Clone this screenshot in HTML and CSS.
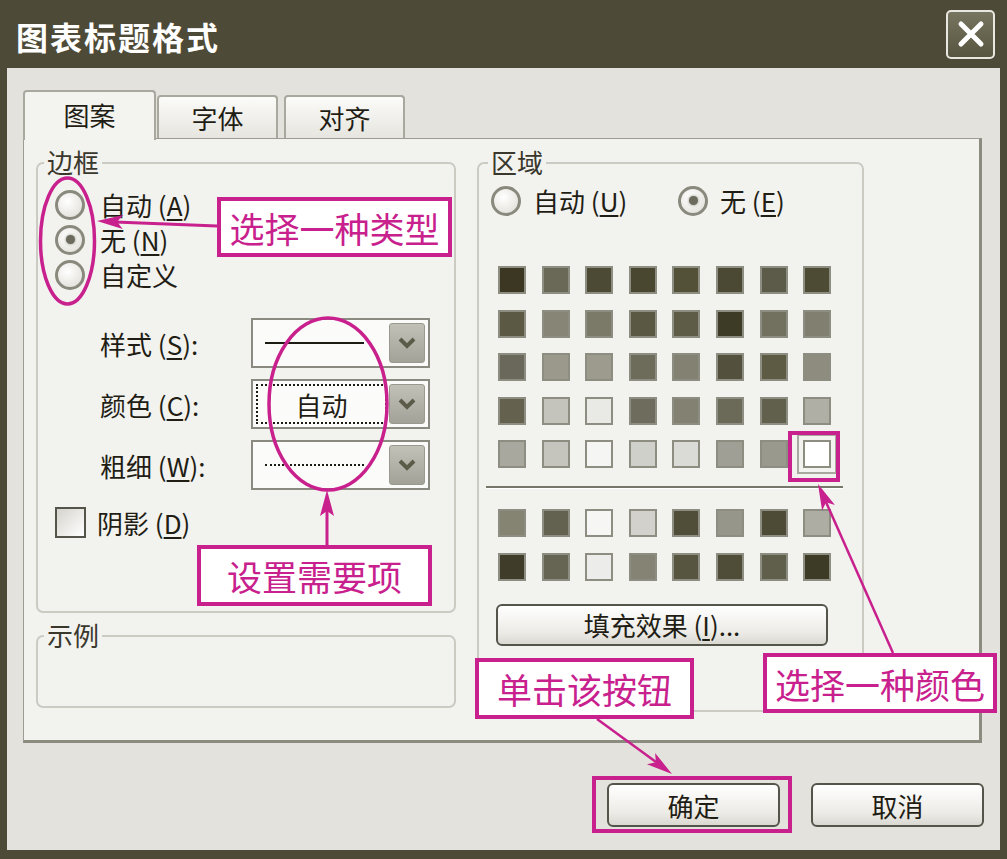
FILE: index.html
```html
<!DOCTYPE html>
<html lang="zh-CN">
<head>
  <meta charset="UTF-8">
  <title>图表标题格式</title>
  <link rel="stylesheet" href="styles.css">
</head>
<body>

<div class="window">
  <div class="titlebar">
    <span class="title">图表标题格式</span>
    <div class="close">
      <svg width="30" height="30" viewBox="0 0 30 30">
        <path d="M5 5 L25 25 M25 5 L5 25" stroke="#fff" stroke-width="5" stroke-linecap="round"/>
      </svg>
    </div>
  </div>

  <div class="client">
    <div class="tabs">
      <div class="tab active">图案</div>
      <div class="tab">字体</div>
      <div class="tab tab-last">对齐</div>
    </div>

    <div class="panel">
      <div class="col-left">
        <!-- 边框 -->
        <div class="group border-group">
          <div class="group-title">边框</div>
          <div class="radios">
            <div class="radio-row"><span class="radio"></span>自动 (<u>A</u>)</div>
            <div class="radio-row"><span class="radio checked"></span>无 (<u>N</u>)</div>
            <div class="radio-row"><span class="radio"></span>自定义</div>
          </div>
          <div class="combos">
            <div class="combo-row">
              <span class="combo-label">样式 (<u>S</u>):</span>
              <div class="combo">
                <div class="combo-field"><span class="line solid"></span></div>
                <span class="drop"><svg width="20" height="16" viewBox="0 0 20 16"><path d="M3 4 L10 11 L17 4" fill="none" stroke="#5c5b49" stroke-width="4"/></svg></span>
              </div>
            </div>
            <div class="combo-row">
              <span class="combo-label">颜色 (<u>C</u>):</span>
              <div class="combo">
                <div class="combo-field focus">自动</div>
                <span class="drop"><svg width="20" height="16" viewBox="0 0 20 16"><path d="M3 4 L10 11 L17 4" fill="none" stroke="#5c5b49" stroke-width="4"/></svg></span>
              </div>
            </div>
            <div class="combo-row">
              <span class="combo-label">粗细 (<u>W</u>):</span>
              <div class="combo">
                <div class="combo-field"><span class="line dotted"></span></div>
                <span class="drop"><svg width="20" height="16" viewBox="0 0 20 16"><path d="M3 4 L10 11 L17 4" fill="none" stroke="#5c5b49" stroke-width="4"/></svg></span>
              </div>
            </div>
          </div>
          <div class="check-row"><span class="check"></span>阴影 (<u>D</u>)</div>
        </div>

        <!-- 示例 -->
        <div class="group example-group">
          <div class="group-title">示例</div>
        </div>
      </div>

      <!-- 区域 -->
      <div class="group area-group">
        <div class="group-title">区域</div>
        <div class="area-radios">
          <div class="radio-row first"><span class="radio"></span>自动 (<u>U</u>)</div>
          <div class="radio-row"><span class="radio checked"></span>无 (<u>E</u>)</div>
        </div>

        <div class="palette">
          <span class="swatch" style="background:#3b3723"></span>
          <span class="swatch" style="background:#6a6957"></span>
          <span class="swatch" style="background:#4c4a35"></span>
          <span class="swatch" style="background:#4a4730"></span>
          <span class="swatch" style="background:#545139"></span>
          <span class="swatch" style="background:#4b4833"></span>
          <span class="swatch" style="background:#5c5b49"></span>
          <span class="swatch" style="background:#4e4b34"></span>

          <span class="swatch" style="background:#5b5944"></span>
          <span class="swatch" style="background:#878676"></span>
          <span class="swatch" style="background:#7b7a68"></span>
          <span class="swatch" style="background:#5a5843"></span>
          <span class="swatch" style="background:#5e5b47"></span>
          <span class="swatch" style="background:#3d3a25"></span>
          <span class="swatch" style="background:#727160"></span>
          <span class="swatch" style="background:#818070"></span>

          <span class="swatch" style="background:#69685a"></span>
          <span class="swatch" style="background:#9a998b"></span>
          <span class="swatch" style="background:#9c9b8e"></span>
          <span class="swatch" style="background:#6d6c5b"></span>
          <span class="swatch" style="background:#838272"></span>
          <span class="swatch" style="background:#53513d"></span>
          <span class="swatch" style="background:#5e5b45"></span>
          <span class="swatch" style="background:#8d8c7e"></span>

          <span class="swatch" style="background:#64624e"></span>
          <span class="swatch" style="background:#c4c3bc"></span>
          <span class="swatch" style="background:#e9e9e6"></span>
          <span class="swatch" style="background:#6e6d5d"></span>
          <span class="swatch" style="background:#838272"></span>
          <span class="swatch" style="background:#6b6a58"></span>
          <span class="swatch" style="background:#61604c"></span>
          <span class="swatch" style="background:#b0afa6"></span>

          <span class="swatch" style="background:#a9a89f"></span>
          <span class="swatch" style="background:#c5c4bd"></span>
          <span class="swatch" style="background:#f5f5f3"></span>
          <span class="swatch" style="background:#d0d0cb"></span>
          <span class="swatch" style="background:#dadad6"></span>
          <span class="swatch" style="background:#a09f95"></span>
          <span class="swatch" style="background:#9a998d"></span>
          <span class="swatch selected" style="background:#ffffff"></span>
        </div>

        <div class="sep"></div>

        <div class="palette extra">
          <span class="swatch" style="background:#858473"></span>
          <span class="swatch" style="background:#636150"></span>
          <span class="swatch" style="background:#f6f6f4"></span>
          <span class="swatch" style="background:#d2d1cc"></span>
          <span class="swatch" style="background:#504d38"></span>
          <span class="swatch" style="background:#97968a"></span>
          <span class="swatch" style="background:#4d4b36"></span>
          <span class="swatch" style="background:#aeada4"></span>

          <span class="swatch" style="background:#3f3c2a"></span>
          <span class="swatch" style="background:#666553"></span>
          <span class="swatch" style="background:#ececea"></span>
          <span class="swatch" style="background:#858474"></span>
          <span class="swatch" style="background:#57553f"></span>
          <span class="swatch" style="background:#4f4c37"></span>
          <span class="swatch" style="background:#605f4c"></span>
          <span class="swatch" style="background:#3d3a26"></span>
        </div>

        <div class="btn fill-btn">填充效果 (<u>I</u>)...</div>
      </div>
    </div>

    <div class="footer">
      <div class="btn dlg-btn">确定</div>
      <div class="btn dlg-btn">取消</div>
    </div>
  </div>

  <!-- annotation marks -->
  <svg class="marks" width="1007" height="859" viewBox="0 0 1007 859">
    <g fill="none" stroke="#c8208c" stroke-width="3.5">
      <ellipse cx="67.5" cy="241" rx="27" ry="63"/>
      <ellipse cx="328" cy="404" rx="59" ry="86"/>
      <rect x="790" y="433" width="48" height="47" stroke-width="4"/>
      <rect x="594" y="778" width="196" height="53" stroke-width="4"/>
      <line x1="217" y1="226" x2="115" y2="222" stroke-width="3"/>
      <line x1="327" y1="545" x2="327" y2="508" stroke-width="3"/>
      <line x1="893" y1="653" x2="826" y2="502" stroke-width="2.5"/>
      <line x1="597" y1="719" x2="656" y2="762" stroke-width="2.5"/>
    </g>
    <g fill="#c8208c">
      <polygon points="97,221 123.3,215.1 117,221.8 122.7,229.1"/>
      <polygon points="327,490 320,516 327,511 334,516"/>
      <polygon points="818,484 834.9,505 826.1,502.3 822.1,510.6"/>
      <polygon points="672,774 655.1,753 655.9,762.2 646.9,764.2"/>
    </g>
  </svg>

  <div class="callout c-type">选择一种类型</div>
  <div class="callout c-set">设置需要项</div>
  <div class="callout c-color">选择一种颜色</div>
  <div class="callout c-click">单击该按钮</div>
</div>

</body>
</html>
```

FILE: styles.css
```css
* {
  box-sizing: border-box;
}
body {
  margin: 0;
  width: 1007px;
  height: 859px;
  overflow: hidden;
  font-family: "Noto Sans CJK SC", "Noto Sans", sans-serif;
  color: #1f1d14;
}
u {
  text-decoration: underline;
  text-underline-offset: 3px;
}

/* window frame */
.window {
  position: relative;
  width: 1007px;
  height: 859px;
  background: #4d4a37;
  display: flex;
  flex-direction: column;
}
.titlebar {
  height: 68px;
  display: flex;
  align-items: center;
  justify-content: space-between;
  padding: 4px 12px 0 16px;
}
.title {
  color: #fff;
  font-size: 32px;
  font-weight: bold;
  letter-spacing: 2px;
}
.close {
  width: 49px;
  height: 49px;
  margin-top: -4px;
  border: 2px solid #e9e8e0;
  border-radius: 5px;
  background: linear-gradient(#77745f, #57543f);
  display: flex;
  align-items: center;
  justify-content: center;
}
.client {
  flex: 1;
  margin: 0 7px 9px 7px;
  background: #e3e2dc;
  padding: 22px 18px 0 16px;
  display: flex;
  flex-direction: column;
}

/* tabs */
.tabs {
  position: relative;
  z-index: 1;
  height: 50px;
  margin-bottom: -2px;
  display: flex;
  align-items: flex-start;
}
.tab {
  width: 121px;
  height: 43px;
  margin-top: 5px;
  margin-left: 1px;
  border: 2px solid #a9a89f;
  border-bottom: none;
  border-radius: 4px 4px 0 0;
  background: linear-gradient(#fbfbf9, #e6e5df);
  font-size: 26px;
  display: flex;
  align-items: center;
  justify-content: center;
}
.tab.active {
  width: 133px;
  height: 50px;
  margin-top: 0;
  margin-left: 0;
  background: #f3f3f0;
  padding-bottom: 4px;
}
.tab-last {
  margin-left: 6px;
}
.panel {
  width: 959px;
  height: 605px;
  background: #f2f2ef;
  border-top: 1px solid #9d9c92;
  border-left: 1px solid #9d9c92;
  border-right: 3px solid #8c8b80;
  border-bottom: 3px solid #8c8b80;
  padding: 23px 0 0 12px;
  display: flex;
  align-items: flex-start;
}

/* group boxes */
.group {
  border: 2px solid #cbcac3;
  border-radius: 7px;
}
.group-title {
  width: fit-content;
  margin: -16px 0 0 6px;
  padding: 0 3px;
  background: #f2f2ef;
  font-size: 26px;
  line-height: 28px;
  color: #3a382c;
}
.col-left {
  width: 420px;
}
.border-group {
  height: 451px;
  padding-left: 17px;
}
.border-group .group-title {
  margin-left: -11px;
}
.example-group {
  height: 73px;
  margin-top: 22px;
}
.area-group {
  width: 387px;
  height: 550px;
  margin-left: 21px;
}
.area-group .group-title {
  margin-left: 9px;
}

/* radios */
.radios {
  margin-top: 11px;
}
.radio-row {
  height: 35px;
  display: flex;
  align-items: center;
  font-size: 26px;
}
.radio {
  width: 30px;
  height: 30px;
  margin-right: 15px;
  border: 3px solid #8a897d;
  border-radius: 50%;
  background: radial-gradient(circle at 40% 35%, #ffffff, #dcdbd4);
  display: flex;
  align-items: center;
  justify-content: center;
}
.radio.checked::after {
  content: "";
  width: 9px;
  height: 9px;
  border-radius: 50%;
  background: #6b6a5c;
  box-shadow: 0 0 3px #8a897d;
}
.area-radios {
  margin-top: 7px;
  padding-left: 12px;
  display: flex;
}
.area-radios .radio {
  margin-right: 12px;
}
.area-radios .first {
  width: 187px;
}

/* combos */
.combos {
  margin-top: 26px;
  margin-left: 45px;
  display: flex;
  flex-direction: column;
  gap: 11px;
}
.combo-row {
  height: 50px;
  display: flex;
  align-items: center;
}
.combo-label {
  width: 151px;
  font-size: 26px;
}
.combo {
  width: 179px;
  height: 50px;
  border: 2px solid #8b8a80;
  background: #fbfbfa;
  display: flex;
  padding: 3px;
  gap: 2px;
}
.combo-field {
  flex: 1;
  display: flex;
  align-items: center;
  justify-content: center;
  font-size: 26px;
}
.combo-field.focus {
  border: 2px dotted #1c1b14;
}
.line {
  width: 99px;
  margin-right: 14px;
}
.line.solid {
  border-top: 2px solid #1c1b14;
}
.line.dotted {
  border-top: 2px dotted #1c1b14;
}
.drop {
  width: 36px;
  border: 1px solid #9a998f;
  border-radius: 3px;
  background: linear-gradient(#c2c1b8, #a3a298);
  display: flex;
  align-items: center;
  justify-content: center;
}

/* checkbox */
.check-row {
  margin-top: 17px;
  height: 31px;
  display: flex;
  align-items: center;
  font-size: 26px;
}
.check {
  width: 31px;
  height: 31px;
  margin-right: 11px;
  border: 2px solid #55544a;
  background: linear-gradient(135deg, #d4d3cc, #ffffff);
}

/* palette */
.palette {
  margin: 48px 0 0 19px;
  display: grid;
  grid-template-columns: repeat(8, 28px);
  grid-auto-rows: 28px;
  column-gap: 15.6px;
  row-gap: 15.5px;
}
.palette.extra {
  margin-top: 20px;
}
.swatch {
  border: 2px solid #8e8d82;
}
.swatch.selected {
  outline: 2px solid #a9a89e;
  outline-offset: 4px;
}
.sep {
  width: 357px;
  height: 3px;
  margin: 18px 0 0 7px;
  border-top: 2px solid #77766b;
  border-bottom: 1px solid #ffffff;
}

/* buttons */
.btn {
  border: 2px solid #55544a;
  border-radius: 6px;
  background: linear-gradient(#ffffff, #ecebe6 70%, #d9d8d1);
  font-size: 26px;
  display: flex;
  align-items: center;
  justify-content: center;
}
.fill-btn {
  width: 332px;
  height: 42px;
  margin: 23px 0 0 17px;
}
.footer {
  padding-top: 40px;
  display: flex;
  justify-content: flex-end;
  gap: 31px;
  margin-right: -2px;
}
.dlg-btn {
  width: 173px;
  height: 44px;
}

/* annotations */
.marks {
  position: absolute;
  left: 0;
  top: 0;
  pointer-events: none;
}
.callout {
  position: absolute;
  background: #fff;
  border: 4px solid #c8208c;
  color: #c8208c;
  font-size: 35px;
  line-height: 1;
  display: flex;
  align-items: center;
  justify-content: center;
}
.c-type {
  left: 217px;
  top: 197px;
  width: 235px;
  height: 60px;
}
.c-set {
  left: 197px;
  top: 545px;
  width: 235px;
  height: 61px;
}
.c-color {
  left: 763px;
  top: 653px;
  width: 234px;
  height: 60px;
}
.c-click {
  left: 475px;
  top: 658px;
  width: 219px;
  height: 61px;
}
```
